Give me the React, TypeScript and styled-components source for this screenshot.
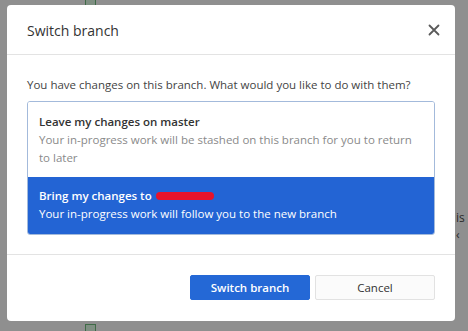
import React from "react";
import styled, { createGlobalStyle } from "styled-components";

const Global = createGlobalStyle`
  html, body { margin: 0; padding: 0; }
  body {
    width: 468px;
    height: 331px;
    overflow: hidden;
    background: #8f8f8f;
    font-family: "Open Sans", "Noto Sans", sans-serif;
  }
`;

const Backdrop = styled.div`
  position: relative;
  width: 468px;
  height: 331px;
  box-sizing: border-box;
  padding: 5px 13px 0 7px;
  background: #8f8f8f;
`;

const BgIcon = styled.div<{ $top: number }>`
  position: absolute;
  left: 85px;
  top: ${(p) => p.$top}px;
  width: 11px;
  height: 9px;
  border: 1px solid #3f6b47;
  background: #7f8f82;
  box-sizing: border-box;
`;

const BgText = styled.div`
  position: absolute;
  left: 456px;
  top: 209px;
  font-size: 12px;
  color: #2a2a2a;
`;

const Modal = styled.div`
  position: relative;
  width: 448px;
  height: 316px;
  background: #fff;
  border-radius: 4px;
  display: flex;
  flex-direction: column;
  box-sizing: border-box;
`;

const Header = styled.div`
  height: 50px;
  display: flex;
  align-items: center;
  justify-content: space-between;
  padding: 0 15px 0 20px;
  border-bottom: 1px solid #e3e3e3;
  box-sizing: border-box;
`;

const Title = styled.h2`
  margin: 0;
  font-size: 14px;
  font-weight: 400;
  color: #333;
  padding-top: 2px;
`;

const Close = styled.button`
  border: 0;
  background: none;
  padding: 0;
  width: 12px;
  height: 12px;
  display: flex;
  cursor: pointer;
`;

const Body = styled.div`
  flex: 1;
  padding: 22px 20px 0 20px;
  border-bottom: 1px solid #e3e3e3;
`;

const Prompt = styled.p`
  margin: 0 0 8px 0;
  font-size: 11.5px;
  line-height: 16px;
  color: #444;
`;

const List = styled.div`
  border: 1px solid #a3badb;
  border-radius: 3px;
  overflow: hidden;
  display: flex;
  flex-direction: column;
`;

const Option = styled.div<{ $selected?: boolean }>`
  padding: ${(p) => (p.$selected ? "10px 11px 11px" : "11px 11px 10px")};
  background: ${(p) => (p.$selected ? "#2364d4" : "#fff")};
  color: ${(p) => (p.$selected ? "#fff" : "#333")};
`;

const OptTitle = styled.div<{ $selected?: boolean }>`
  font-size: 11.5px;
  font-weight: 600;
  line-height: 18px;
  color: ${(p) => (p.$selected ? "#fff" : "#333")};
  display: flex;
  align-items: center;
`;

const OptDesc = styled.div<{ $selected?: boolean }>`
  font-size: 11.5px;
  line-height: 18px;
  color: ${(p) => (p.$selected ? "#fff" : "#8a8a8a")};
`;

const Redact = styled.span`
  display: inline-block;
  width: 58px;
  height: 8px;
  margin-left: 4px;
  background: #e8132a;
  border-radius: 4px;
`;

const Footer = styled.div`
  height: 66px;
  display: flex;
  justify-content: flex-end;
  align-items: flex-start;
  gap: 5px;
  padding: 20px 20px 0 0;
  box-sizing: border-box;
`;

const Button = styled.button<{ $primary?: boolean }>`
  width: 120px;
  height: 25px;
  border-radius: 2px;
  font-family: "Open Sans", "Noto Sans", sans-serif;
  font-size: 11.5px;
  cursor: pointer;
  border: 1px solid ${(p) => (p.$primary ? "#2468d6" : "#e2e2e2")};
  background: ${(p) => (p.$primary ? "#2468d6" : "#fbfbfb")};
  color: ${(p) => (p.$primary ? "#fff" : "#333")};
  font-weight: ${(p) => (p.$primary ? 600 : 400)};
`;

export default function App() {
  return (
    <>
      <Global />
      <Backdrop>
        <BgIcon $top={-2} />
        <BgIcon $top={324} />
        <BgText>is ‹</BgText>
        <Modal>
          <Header>
            <Title>Switch branch</Title>
            <Close aria-label="Close">
              <svg width="12" height="12" viewBox="0 0 12 12">
                <path d="M1.5 1.5 L10.5 10.5 M10.5 1.5 L1.5 10.5" stroke="#5a5a5a" strokeWidth="1.8" strokeLinecap="round" />
              </svg>
            </Close>
          </Header>
          <Body>
            <Prompt>You have changes on this branch. What would you like to do with them?</Prompt>
            <List>
              <Option>
                <OptTitle>Leave my changes on master</OptTitle>
                <OptDesc>Your in-progress work will be stashed on this branch for you to return to later</OptDesc>
              </Option>
              <Option $selected>
                <OptTitle $selected>
                  Bring my changes to<Redact />
                </OptTitle>
                <OptDesc $selected>Your in-progress work will follow you to the new branch</OptDesc>
              </Option>
            </List>
          </Body>
          <Footer>
            <Button $primary>Switch branch</Button>
            <Button>Cancel</Button>
          </Footer>
        </Modal>
      </Backdrop>
    </>
  );
}
